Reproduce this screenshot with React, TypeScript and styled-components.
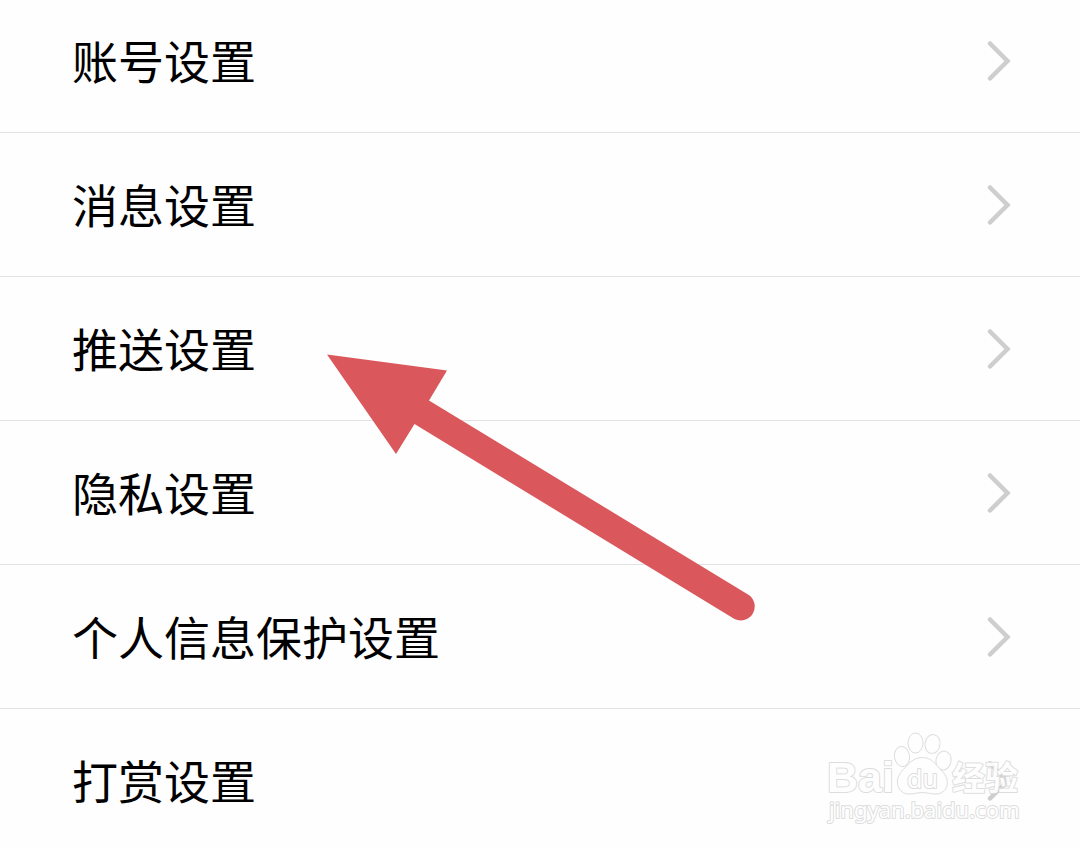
import React from "react";
import styled, { createGlobalStyle } from "styled-components";

const GlobalStyle = createGlobalStyle`
  * { box-sizing: border-box; }
  body { margin: 0; background: #fefefe; }
`;

const Page = styled.main`
  position: relative;
  min-height: 100vh;
  overflow: hidden;
  background: #fefefe;
  font-family: "Noto Sans CJK SC", "Noto Sans", sans-serif;
`;

const List = styled.ul`
  margin: 0;
  padding: 0;
  list-style: none;
`;

const Item = styled.li`
  border-bottom: 1px solid #e2e2e2;
  &:last-child { border-bottom: 0; }
`;

const RowButton = styled.button<{ $first?: boolean }>`
  display: flex;
  align-items: center;
  justify-content: space-between;
  width: 100%;
  padding: ${(p) => (p.$first ? 26 : 37)}px 68px 36px 72px;
  border: 0;
  background: transparent;
  color: #000;
  font: inherit;
  text-align: left;
  cursor: pointer;
`;

const Label = styled.span`
  padding-bottom: 4px;
  font-size: 46px;
  line-height: 66px;
`;

const Chevron = styled.svg`
  flex: none;
  width: 26px;
  height: 42px;
`;

const Pointer = styled.svg`
  position: absolute;
  left: 326px;
  top: 352px;
  width: 430px;
  height: 270px;
  pointer-events: none;
`;

const Watermark = styled.svg`
  position: absolute;
  right: 55px;
  top: 728px;
  width: 200px;
  height: 100px;
  pointer-events: none;
`;

const Mark = styled.text<{ $light?: boolean }>`
  font-family: ${(p) => (p.$light ? '"Noto Sans"' : '"Liberation Sans", "Noto Sans CJK SC"')}, sans-serif;
  font-weight: ${(p) => (p.$light ? 400 : 700)};
  paint-order: stroke;
  stroke-width: 2px;
`;

const items = ["账号设置", "消息设置", "推送设置", "隐私设置", "个人信息保护设置", "打赏设置"];

export default function App() {
  return (
    <Page>
      <GlobalStyle />
      <List>
        {items.map((label, i) => (
          <Item key={label}>
            <RowButton type="button" $first={i === 0}>
              <Label>{label}</Label>
              <Chevron viewBox="0 0 26 42" aria-hidden="true">
                <path d="M4 3.500 L21.500 21 L4 38.500" fill="none" stroke="#cecece" strokeWidth="4.500" strokeLinecap="round" />
              </Chevron>
            </RowButton>
          </Item>
        ))}
      </List>
      <Pointer viewBox="326 352 430 270" aria-hidden="true">
        <path
          d="M327 354.500 L447 370.500 L429 400.500 L748 594.500 A14 14 0 0 1 734.500 619 L414.500 424 L396 454 Z"
          fill="#da575c"
        />
      </Pointer>
      <Watermark viewBox="825 728 200 100" role="img" aria-label="Baidu 经验 jingyan.baidu.com">
        <g fill="#fff" stroke="#dadada" strokeWidth="1" strokeLinejoin="round" opacity="0.9">
          <ellipse cx="902" cy="756.500" rx="7.500" ry="10" transform="rotate(-8 902 756.500)" />
          <ellipse cx="915.500" cy="743" rx="7.500" ry="10" />
          <ellipse cx="932.500" cy="744" rx="7.500" ry="9.500" transform="rotate(10 932.500 744)" />
          <ellipse cx="943.500" cy="760.500" rx="7.500" ry="9.500" transform="rotate(10 943.500 760.500)" />
          <path d="M922.500 757.500 C932 757.500 936 765 942 771 C952 781 947 794 936 794 C929 794 927 792.500 922.500 792.500 C917 792.500 915 794 909 794 C898 794 893 781 902 771 C908 765 912 757.500 922.500 757.500 Z" />
          <Mark x="827" y="792" fontSize="43">Bai</Mark>
          <Mark x="907" y="788" fontSize="25" $light>du</Mark>
          <Mark x="952" y="790" fontSize="33">经验</Mark>
          <Mark x="829" y="818" fontSize="22" $light>jingyan.baidu.com</Mark>
        </g>
      </Watermark>
    </Page>
  );
}
